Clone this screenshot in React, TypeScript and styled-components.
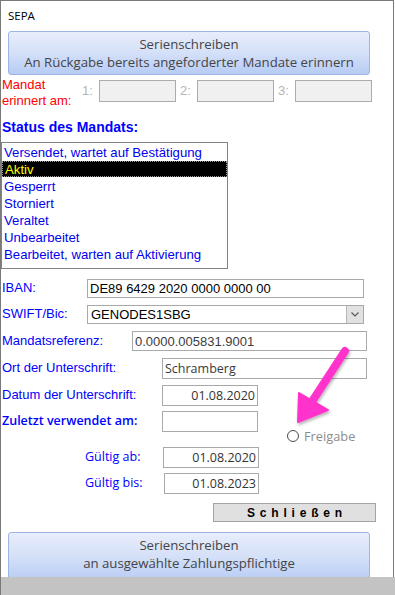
import styled, { createGlobalStyle } from 'styled-components';

const GlobalStyle = createGlobalStyle`
  html, body {
    margin: 0;
    padding: 0;
    background: #ffffff;
  }
  * {
    box-sizing: border-box;
  }
`;

const Screen = styled.div`
  position: relative;
  width: 395px;
  height: 595px;
  overflow: hidden;
  background: #ffffff;
  font-family: 'Liberation Sans', Arial, sans-serif;
`;

const Window = styled.div`
  width: 394px;
  height: 577px;
  border: 1px solid #7a7a7a;
  border-bottom: none;
  overflow: hidden;
  display: flex;
  flex-direction: column;
`;

const Title = styled.div`
  height: 30px;
  line-height: 30px;
  padding-left: 7px;
  font-family: 'Open Sans', 'Noto Sans', sans-serif;
  font-size: 11.5px;
  color: #000000;
`;

const BlueButton = styled.div<{ $mt: number; $h: number }>`
  margin: ${(p) => p.$mt}px 0 0 7px;
  width: 362px;
  height: ${(p) => p.$h}px;
  flex-shrink: 0;
  border: 1px solid #9db4e6;
  border-radius: 3px;
  background: linear-gradient(to bottom, #e8edfb 0%, #d4e0f8 50%, #b7cbf4 100%);
  display: flex;
  flex-direction: column;
  align-items: center;
  padding-top: 3px;
  font-family: 'Open Sans', 'Noto Sans', sans-serif;
  font-size: 13.2px;
  line-height: 18px;
  color: #454545;
  white-space: nowrap;
`;

const ReminderRow = styled.div`
  margin-top: 2px;
  height: 32px;
  display: flex;
  align-items: flex-start;
`;

const RedLabel = styled.div`
  width: 81px;
  padding-left: 1px;
  font-size: 13px;
  line-height: 15.5px;
  color: #ff0000;
`;

const ReminderGroup = styled.div`
  display: flex;
  margin-top: 3px;
  margin-right: 4px;
`;

const NumLabel = styled.div`
  width: 17px;
  font-size: 13px;
  line-height: 22px;
  color: #b4b4b4;
`;

const GreyBox = styled.div`
  width: 77px;
  height: 22px;
  background: #f0f0f0;
  border: 1px solid #acacac;
`;

const Heading = styled.div`
  margin-top: 11px;
  padding-left: 1px;
  font-size: 14px;
  font-weight: bold;
  line-height: 16px;
  color: #0000ff;
`;

const ListBox = styled.div`
  margin-top: 7px;
  width: 227px;
  height: 127px;
  flex-shrink: 0;
  border: 1px solid #828282;
  padding-top: 1px;
`;

const ListItem = styled.div<{ $selected?: boolean }>`
  height: ${(p) => (p.$selected ? 16 : 17)}px;
  margin-bottom: ${(p) => (p.$selected ? 1 : 0)}px;
  padding-left: 2px;
  font-size: 13.2px;
  line-height: ${(p) => (p.$selected ? 15 : 17)}px;
  color: ${(p) => (p.$selected ? '#ffff00' : '#0000ee')};
  background: ${(p) => (p.$selected ? '#000000' : 'transparent')};
  border: ${(p) => (p.$selected ? '1px dotted #9a9a9a' : 'none')};
  white-space: nowrap;
`;

const FieldRow = styled.div<{ $mt: number }>`
  margin-top: ${(p) => p.$mt}px;
  display: flex;
  align-items: flex-start;
`;

const FieldLabel = styled.div<{ $w: number; $h: number; $indent?: number; $segoe?: boolean; $bold?: boolean }>`
  width: ${(p) => p.$w}px;
  height: ${(p) => p.$h}px;
  padding-left: ${(p) => p.$indent ?? 1}px;
  padding-bottom: 2px;
  display: flex;
  align-items: center;
  font-family: ${(p) => (p.$segoe ? "'Open Sans', 'Noto Sans', sans-serif" : "'Liberation Sans', Arial, sans-serif")};
  font-size: ${(p) => (p.$segoe ? 12.5 : 13)}px;
  font-weight: ${(p) => (p.$bold ? 600 : 400)};
  color: #0000ff;
  white-space: nowrap;
`;

const Field = styled.div<{ $w: number; $h: number; $align?: string; $segoe?: boolean; $color?: string }>`
  width: ${(p) => p.$w}px;
  height: ${(p) => p.$h}px;
  border: 1px solid #a9a9a9;
  background: #ffffff;
  display: flex;
  align-items: center;
  justify-content: ${(p) => (p.$align === 'right' ? 'flex-end' : 'flex-start')};
  padding: 0 2px;
  font-family: ${(p) => (p.$segoe ? "'Open Sans', 'Noto Sans', sans-serif" : "'Liberation Sans', Arial, sans-serif")};
  font-size: ${(p) => (p.$segoe ? 12.5 : 13)}px;
  color: ${(p) => p.$color ?? '#000000'};
  white-space: nowrap;
`;

const ComboText = styled.div`
  flex: 1;
  padding-left: 1px;
`;

const ComboButton = styled.div`
  width: 17px;
  height: 17px;
  margin-right: -2px;
  background: #e1e1e1;
  border-left: 1px solid #b8b8b8;
  display: flex;
  align-items: center;
  justify-content: center;
`;

const Radio = styled.div`
  margin: 18px 0 0 29px;
  display: flex;
  align-items: center;
  gap: 5px;
  font-family: 'Open Sans', 'Noto Sans', sans-serif;
  font-size: 12.8px;
  line-height: 14px;
  color: #8c8c8c;
`;

const RadioCircle = styled.div`
  width: 12px;
  height: 12px;
  border-radius: 50%;
  border: 1px solid #4a4a4a;
  background: #ffffff;
`;

const CloseButton = styled.div`
  margin: 9px 0 0 212px;
  width: 163px;
  height: 19px;
  flex-shrink: 0;
  background: #e0e0e0;
  border: 1px solid #a3a3a3;
  display: flex;
  align-items: center;
  justify-content: center;
  padding-left: 5px;
  font-size: 12px;
  font-weight: bold;
  letter-spacing: 4.8px;
  color: #000000;
`;

const StatusBar = styled.div`
  height: 18px;
  background: #c3c3c3;
  border-left: 1px solid #7a7a7a;
`;

const Overlay = styled.svg`
  position: absolute;
  left: 0;
  top: 0;
  pointer-events: none;
`;

const statuses = [
  'Versendet, wartet auf Bestätigung',
  'Aktiv',
  'Gesperrt',
  'Storniert',
  'Veraltet',
  'Unbearbeitet',
  'Bearbeitet, warten auf Aktivierung',
];

export default function App() {
  return (
    <Screen>
      <GlobalStyle />
      <Window>
        <Title>SEPA</Title>
        <BlueButton $mt={0} $h={44}>
          <span>Serienschreiben</span>
          <span>An Rückgabe bereits angeforderter Mandate erinnern</span>
        </BlueButton>

        <ReminderRow>
          <RedLabel>
            Mandat
            <br />
            erinnert am:
          </RedLabel>
          {['1:', '2:', '3:'].map((n) => (
            <ReminderGroup key={n}>
              <NumLabel>{n}</NumLabel>
              <GreyBox />
            </ReminderGroup>
          ))}
        </ReminderRow>

        <Heading>Status des Mandats:</Heading>
        <ListBox>
          {statuses.map((s) => (
            <ListItem key={s} $selected={s === 'Aktiv'}>
              {s}
            </ListItem>
          ))}
        </ListBox>

        <FieldRow $mt={10}>
          <FieldLabel $w={86} $h={19}>IBAN:</FieldLabel>
          <Field $w={277} $h={19}>DE89 6429 2020 0000 0000 00</Field>
        </FieldRow>
        <FieldRow $mt={7}>
          <FieldLabel $w={86} $h={19}>SWIFT/Bic:</FieldLabel>
          <Field $w={277} $h={19}>
            <ComboText>GENODES1SBG</ComboText>
            <ComboButton>
              <svg width="8" height="5" viewBox="0 0 8 5">
                <path d="M0.5 0.5 L4 4 L7.5 0.5" fill="none" stroke="#555" strokeWidth="1.1" />
              </svg>
            </ComboButton>
          </Field>
        </FieldRow>
        <FieldRow $mt={7}>
          <FieldLabel $w={131} $h={20}>Mandatsreferenz:</FieldLabel>
          <Field $w={235} $h={20} $color="#3c3c3c">0.0000.005831.9001</Field>
        </FieldRow>
        <FieldRow $mt={7}>
          <FieldLabel $w={161} $h={21}>Ort der Unterschrift:</FieldLabel>
          <Field $w={205} $h={21} $segoe $color="#3a3a3a">Schramberg</Field>
        </FieldRow>
        <FieldRow $mt={6}>
          <FieldLabel $w={161} $h={21}>Datum der Unterschrift:</FieldLabel>
          <Field $w={96} $h={21} $segoe $align="right" $color="#333333">01.08.2020</Field>
        </FieldRow>
        <FieldRow $mt={5}>
          <FieldLabel $w={161} $h={21} $segoe $bold>Zuletzt verwendet am:</FieldLabel>
          <Field $w={96} $h={21} />
          <Radio>
            <RadioCircle />
            Freigabe
          </Radio>
        </FieldRow>
        <FieldRow $mt={4}>
          <FieldLabel $w={162} $h={21} $indent={84} $segoe>Gültig ab:</FieldLabel>
          <Field $w={96} $h={21} $segoe $align="right" $color="#333333">01.08.2020</Field>
        </FieldRow>
        <FieldRow $mt={5}>
          <FieldLabel $w={163} $h={21} $indent={84} $segoe>Gültig bis:</FieldLabel>
          <Field $w={95} $h={21} $segoe $align="right" $color="#333333">01.08.2023</Field>
        </FieldRow>

        <CloseButton>Schließen</CloseButton>

        <BlueButton $mt={10} $h={50}>
          <span>Serienschreiben</span>
          <span>an ausgewählte Zahlungspflichtige</span>
        </BlueButton>
      </Window>
      <StatusBar />

      <Overlay width="395" height="595" viewBox="0 0 395 595">
        <defs>
          <filter id="arrowShadow" x="-20%" y="-20%" width="140%" height="140%">
            <feDropShadow dx="1" dy="2" stdDeviation="1.5" floodColor="#000" floodOpacity="0.3" />
          </filter>
        </defs>
        <g filter="url(#arrowShadow)" fill="#ff33cc" stroke="#ff33cc">
          <line x1="345" y1="351" x2="313" y2="400" strokeWidth="8" strokeLinecap="round" />
          <polygon points="299,393 328,410 298,422" strokeWidth="2" strokeLinejoin="round" />
        </g>
      </Overlay>
    </Screen>
  );
}
